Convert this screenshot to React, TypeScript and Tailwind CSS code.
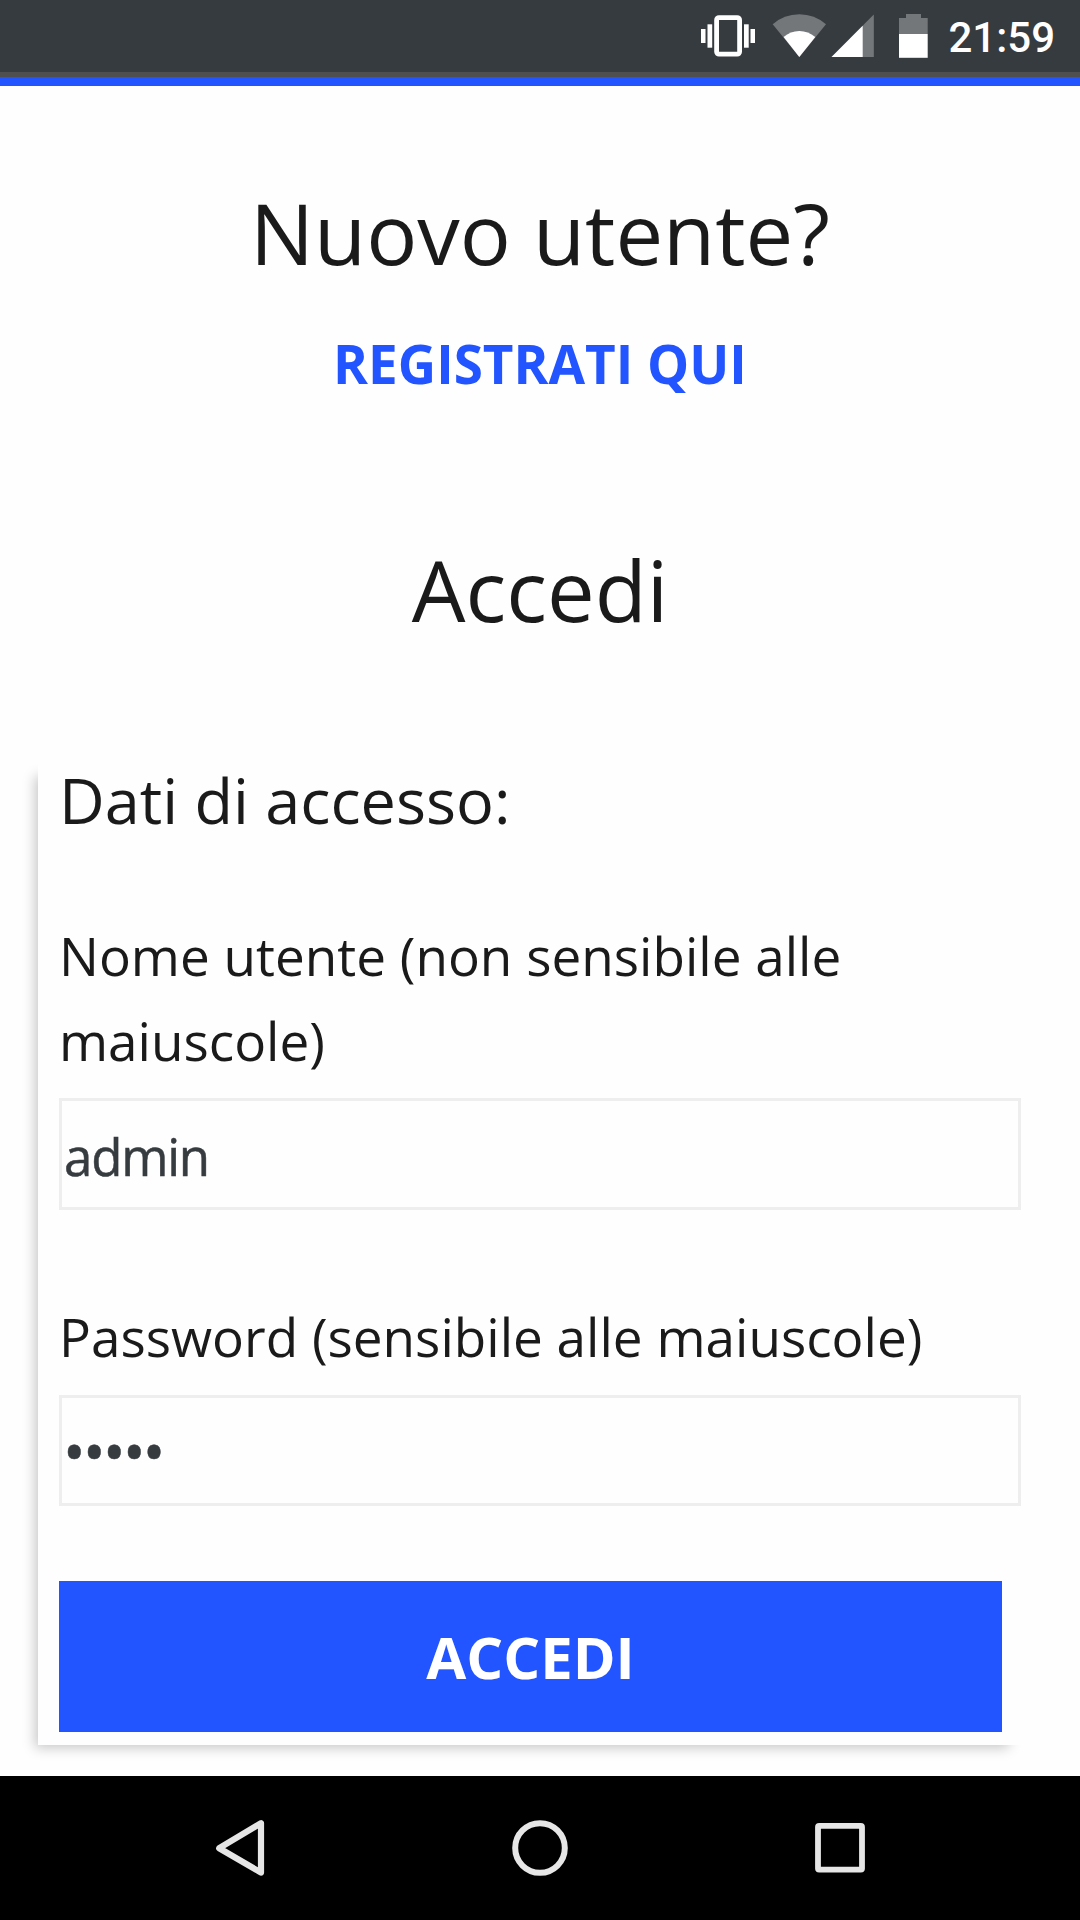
function StatusBar() {
  return (
    <div className="flex h-[77px] items-start justify-end border-b-[5px] border-[#4f4f4f] bg-[#363b3f] pr-[25px]">
      <svg className="h-[72px] w-[248px]" viewBox="692 0 248 72" aria-hidden="true">
        <g fill="#fff">
          <rect x="701" y="29" width="4.5" height="14" />
          <rect x="707.5" y="24.3" width="4.7" height="23.4" />
          <rect x="744" y="24.3" width="4.7" height="23.4" />
          <rect x="750.5" y="29" width="4.5" height="14" />
        </g>
        <rect x="716.6" y="17.6" width="23" height="36.6" rx="2.4" fill="none" stroke="#fff" strokeWidth="4.8" />
        <path d="M799.3 57 772.7 24.2Q784 14.2 799.3 14.2T826 24.2Z" fill="#73777a" />
        <path d="M799.3 57 783.6 37Q790.5 31 799.3 31T815.3 37Z" fill="#fff" />
        <path d="M831.5 57 873.8 14.5V57Z" fill="#73777a" />
        <path d="M831.5 57 862.7 25.7V57Z" fill="#fff" />
        <path d="M906 14h15v4h6.7v16H899V18h7Z" fill="#73777a" />
        <path d="M899 34h28.7v23.8H899Z" fill="#fff" />
      </svg>
      <span className="ml-2 font-['Roboto',sans-serif] text-[42px] font-medium leading-[75px] text-white">21:59</span>
    </div>
  );
}

function NavBar() {
  return (
    <nav className="h-36 bg-black">
      <svg className="h-36 w-full" viewBox="0 0 1080 144" fill="none" stroke="#e6e6e6" aria-hidden="true">
        <path d="M219.2 72.2 261 47.2V96.6Z" strokeWidth="6.2" strokeLinejoin="round" />
        <circle cx="540" cy="72" r="24.8" strokeWidth="6" />
        <rect x="818" y="49.8" width="44" height="43.8" rx="1.2" strokeWidth="5.8" />
      </svg>
    </nav>
  );
}

export default function App() {
  return (
    <div className="flex h-[1920px] w-[1080px] flex-col overflow-hidden bg-[#fefefe] font-['Open_Sans','Noto_Sans',sans-serif] text-[#1a1a1a]">
      <StatusBar />
      <div className="h-[9px] bg-[#2255ff]" />
      <main className="flex flex-1 flex-col pt-24">
        <h1 className="text-center text-[85px] leading-[100px]">Nuovo utente?</h1>
        <a className="mt-[52px] text-center text-[53px] font-bold leading-[60px] text-[#2255ff]">REGISTRATI QUI</a>
        <h1 className="mt-[145px] text-center text-[85px] leading-[100px]">Accedi</h1>
        <form className="mx-[38px] mt-[104px] flex h-[1002px] flex-col bg-[#fefefe] px-[21px] pt-[7px] shadow-[-18px_18px_12px_-15px_rgba(0,0,0,0.22)]">
          <h2 className="text-[63px] leading-[100px]">Dati di accesso:</h2>
          <label className="mt-[63px] text-[53.05px] leading-[85px]">
            Nome utente (non sensibile alle
            <br />
            maiuscole)
          </label>
          <input
            type="text"
            defaultValue="admin"
            className="mt-[15px] h-28 border-[3px] border-[#eee] bg-[#fefefe] pl-[2px] pt-[3px] text-[51px] tracking-[-1.2px] text-[#363b3f] outline-none [-webkit-text-stroke:0.5px_#363b3f]"
          />
          <label className="mt-[84px] text-[53.05px] leading-[85px]">Password (sensibile alle maiuscole)</label>
          <input
            type="password"
            defaultValue="admin"
            className="mt-4 h-[111px] border-[3px] border-[#eee] bg-[#fefefe] pl-px text-[60px] tracking-[-2.6px] text-[#363b3f] outline-none [-webkit-text-stroke:0.5px_#363b3f]"
          />
          <button type="button" className="mt-[75px] h-[151px] w-[943px] bg-[#2255ff] text-[58px] font-bold text-white">
            ACCEDI
          </button>
        </form>
      </main>
      <NavBar />
    </div>
  );
}
